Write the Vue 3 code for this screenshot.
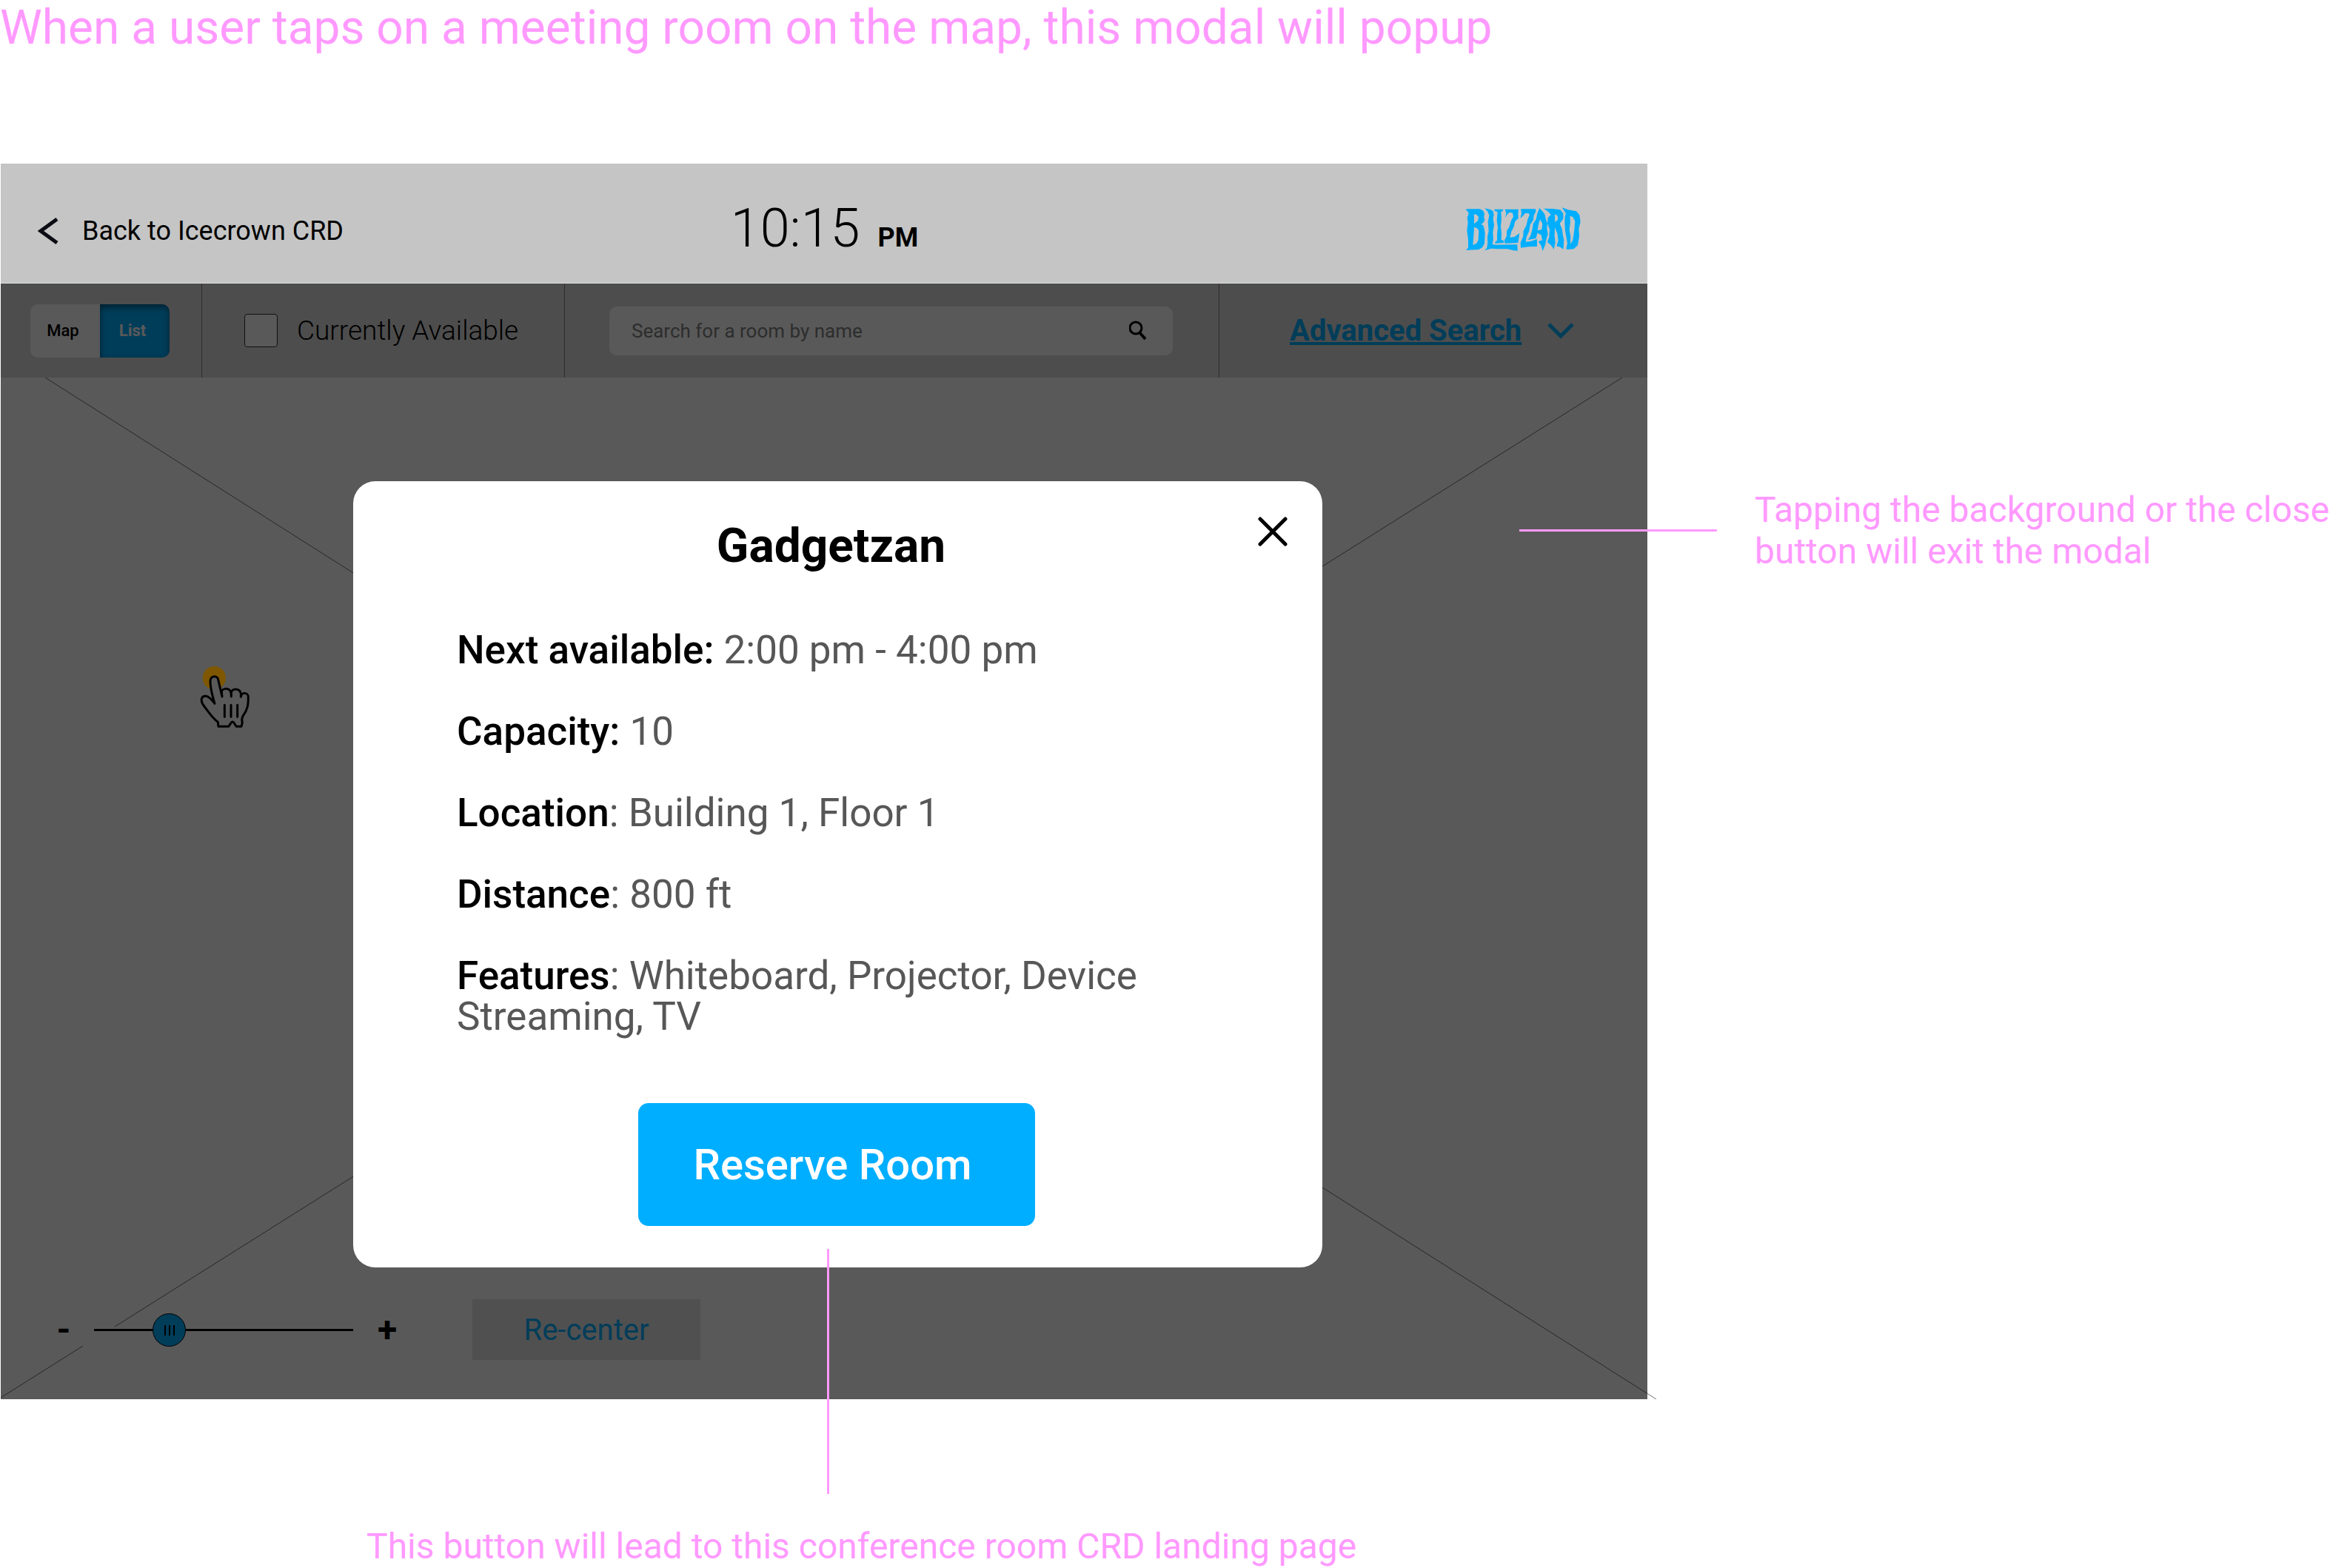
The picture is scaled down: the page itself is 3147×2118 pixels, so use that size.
<script setup>
import { ref } from 'vue'

const view = ref('list')
const available = ref(false)
const query = ref('')
const zoom = ref(26)

const details = [
  { label: 'Next available:', value: ' 2:00 pm - 4:00 pm' },
  { label: 'Capacity:', value: ' 10' },
  { label: 'Location', value: ': Building 1, Floor 1' },
  { label: 'Distance', value: ': 800 ft' },
  { label: 'Features', value: ': Whiteboard, Projector, Device Streaming, TV' },
]
</script>

<template>
  <main class="page">
    <h1 class="caption">When a user taps on a meeting room on the map, this modal will popup</h1>

    <div class="board">
      <section class="frame">
        <header class="header">
          <a class="back" href="#">
            <svg width="30" height="36" viewBox="0 0 30 36" aria-hidden="true">
              <path d="M26 2 L4 18 L26 34" fill="none" stroke="#0b0c14" stroke-width="5" />
            </svg>
            <span>Back to Icecrown CRD</span>
          </a>
          <p class="clock">10:15<span class="meridiem">PM</span></p>
          <svg class="logo" width="157" height="59" viewBox="90 59 471 177" role="img" aria-label="Blizzard">
            <g fill="#00aeff" fill-rule="evenodd">
              <path d="M91 67L104 66L150 66L163 73L168 86L166 100L169 112L162 123L154 128L163 132L167 145L170 165L168 205L160 221L145 230L93 233L102 223L102 190L97 152L101 122L98 100L104 86L101 77ZM126 87L135 88L144 97L141 114L126 126ZM126 139L137 143L145 153L143 192L136 205L121 212L124 175Z" />
              <path d="M169 63L192 68L203 74L206 90L203 105L207 132L202 160L204 188L200 209L215 211L301 210L302 235L285 234L262 228L225 228L195 226L168 234L178 223L181 202L180 178L185 155L182 118L187 92L181 76Z" />
              <path d="M208 67L243 67L243 74L235 77L237 105L234 135L237 165L236 190L246 195L246 203L212 205L211 199L219 194L219 170L222 140L218 112L221 78L210 74Z" />
              <path d="M251 67L306 67L304 84L305 104L292 116L287 138L277 158L271 181L289 179L301 171L310 163L304 203L251 205L248 195L258 175L258 156L269 137L275 115L285 97L282 82L270 79L260 88L252 102L256 82Z" />
              <path d="M315 66L375 66L376 76L368 92L366 110L353 130L349 155L338 180L335 199L355 197L381 188L381 218L345 219L315 223L314 202L325 177L326 154L338 132L343 108L351 89L347 84L333 83L323 95L314 103L318 82Z" />
              <path d="M391 62L401 73L412 86L416 105L423 125L421 145L425 168L418 190L415 208L404 236L397 213L386 198L402 192L398 171L382 163L377 185L344 191L354 176L362 147L365 126L377 108L382 84ZM393 108L403 126L400 149L383 153L387 128Z" />
              <path d="M408 64L444 65L475 69L487 84L487 106L473 125L482 146L486 174L490 190L488 229L475 220L460 216L467 194L463 164L453 141L452 176L455 202L449 229L439 214L423 200L430 180L432 148L423 125L425 102L437 88L424 75ZM453 86L464 94L466 108L454 120Z" />
              <path d="M482 60L507 69L540 75L553 90L557 119L550 145L552 175L546 213L530 228L500 230L500 222L504 206L500 182L495 155L493 122L494 96L498 84ZM514 94L526 98L535 116L532 150L526 192L516 208L517 178L512 150L516 120Z" />
            </g>
          </svg>
        </header>

        <div class="stage">
          <div class="app">
            <div class="toolbar">
              <div class="cell cell-view">
                <div class="toggle" role="group" aria-label="View">
                  <button type="button" class="toggle-item" :class="{ active: view === 'map' }" @click="view = 'map'">Map</button>
                  <button type="button" class="toggle-item" :class="{ active: view === 'list' }" @click="view = 'list'">List</button>
                </div>
              </div>
              <div class="cell cell-available">
                <input id="available" v-model="available" type="checkbox" class="check" />
                <label for="available">Currently Available</label>
              </div>
              <div class="cell cell-search">
                <div class="search">
                  <input v-model="query" type="text" class="search-input" placeholder="Search for a room by name" aria-label="Search for a room by name" />
                  <svg width="24" height="27" viewBox="0 0 24 27" aria-hidden="true">
                    <circle cx="9" cy="10" r="8" fill="none" stroke="#000" stroke-width="3" />
                    <path d="M14 16 L22 25" stroke="#000" stroke-width="4" />
                  </svg>
                </div>
              </div>
              <div class="cell cell-advanced">
                <a href="#" class="advanced">Advanced Search</a>
                <svg width="38" height="24" viewBox="0 0 38 24" aria-hidden="true">
                  <path d="M3 3 L19 19 L35 3" fill="none" stroke="#00aeff" stroke-width="5" />
                </svg>
              </div>
            </div>

            <div class="map">
              <svg class="map-lines" viewBox="0 0 2236 1380" preserveAspectRatio="none" aria-hidden="true">
                <path d="M60 0 L2236 1380 M2190 0 L154 1282 M111 1308 L0 1378" fill="none" stroke="#707070" stroke-width="1" />
              </svg>
              <div class="controls">
                <button type="button" class="step step-out" aria-label="Zoom out">-</button>
                <input v-model="zoom" type="range" min="0" max="100" class="slider" aria-label="Zoom level" />
                <button type="button" class="step step-in" aria-label="Zoom in">+</button>
                <button type="button" class="recenter">Re-center</button>
              </div>
            </div>
          </div>

          <div class="overlay">
            <svg class="tap" width="120" height="130" viewBox="0 0 360 390" aria-hidden="true">
              <circle cx="148" cy="137" r="47" fill="#7e5700" />
              <path
                d="M150 241C142 215 132 180 132 150C132 126 163 124 165 148L180 213L178 195C178 178 210 174 216 198L217 213V198C217 180 250 176 256 200V214C258 194 286 194 286 215C286 245 284 265 264 292C260 300 258 305 262 318L258 334H238L232 326Q222 304 212 326L206 334H165L163 316C140 300 125 275 103 246C90 225 98 208 115 211C130 214 140 228 150 241Z"
                fill="#595959" stroke="#000" stroke-width="9" stroke-linejoin="round"
              />
              <path d="M190 247V295M216 247V295M242 247V295" stroke="#000" stroke-width="9" stroke-linecap="round" />
            </svg>

            <div class="modal" role="dialog" aria-labelledby="room-name">
              <h2 id="room-name" class="room">Gadgetzan</h2>
              <button type="button" class="close" aria-label="Close">
                <svg width="40" height="40" viewBox="0 0 40 40" aria-hidden="true">
                  <path d="M3 3 L37 37 M37 3 L3 37" stroke="#000" stroke-width="5" stroke-linecap="round" />
                </svg>
              </button>
              <dl class="details">
                <div v-for="item in details" :key="item.label">
                  <dt>{{ item.label }}</dt>
                  <dd>{{ item.value }}</dd>
                </div>
              </dl>
              <button type="button" class="reserve">Reserve Room</button>
              <span class="pointer pointer-down"></span>
            </div>
          </div>
        </div>
      </section>

      <aside class="note">
        <span class="pointer pointer-left"></span>
        Tapping the background or the close button will exit the modal
      </aside>
    </div>

    <p class="footnote">This button will lead to this conference room CRD landing page</p>
  </main>
</template>

<style>
body {
  margin: 0;
  background: #fff;
}
</style>

<style scoped>
.page {
  font-family: Roboto, "Liberation Sans", sans-serif;
  color: #000;
}
h1, h2, p, dl, dd {
  margin: 0;
}
button, input {
  font-family: inherit;
  margin: 0;
  padding: 0;
  border: 0;
  box-sizing: border-box;
}
svg {
  display: block;
  flex: none;
}

/* annotations */
.caption, .note, .footnote {
  color: #ff99ff;
  font-weight: 400;
}
.caption {
  font-size: 64px;
  line-height: 76px;
  padding-bottom: 145px;
}
.note {
  position: relative;
  padding-top: 440px;
  font-size: 48px;
  line-height: 56px;
}
.footnote {
  padding: 171px 0 0 495px;
  font-size: 48px;
  line-height: 56px;
}
.pointer {
  position: absolute;
  background: #ff99ff;
}
.pointer-left {
  top: 494px;
  left: -318px;
  width: 267px;
  height: 3px;
}
.pointer-down {
  top: calc(100% - 25px);
  left: calc(50% - 15px);
  width: 3px;
  height: 331px;
}

.board {
  display: grid;
  grid-template-columns: minmax(0, 1fr) 777px;
  column-gap: 145px;
  padding-left: 1px;
}

/* header */
.header {
  display: grid;
  grid-template-columns: 1fr auto 1fr;
  align-items: center;
  padding: 46px 89px 31px 50px;
  background: #c5c5c5;
  border-bottom: 1px solid #dde3e0;
}
.back {
  display: flex;
  align-items: center;
  gap: 30px;
  padding-top: 6px;
  font-size: 36px;
  line-height: 42px;
  color: #000;
  text-decoration: none;
}
.clock {
  font-size: 72px;
  line-height: 84px;
  font-weight: 300;
  padding-left: 40px;
}
.meridiem {
  margin-left: 24px;
  font-size: 36px;
  line-height: 36px;
  font-weight: 700;
}
.logo {
  justify-self: end;
}

/* stage: the app with the dimmed layer over it */
.stage {
  display: grid;
}
.app, .overlay {
  grid-area: 1 / 1;
  min-width: 0;
}
.app {
  display: flex;
  flex-direction: column;
}
.overlay {
  position: relative;
  padding: 267px 439px 178px 476px;
  background: rgba(0, 0, 0, 0.65);
}

/* toolbar */
.toolbar {
  display: flex;
  height: 127px;
  background: #dcdcdc;
}
.cell {
  display: flex;
  align-items: center;
  box-sizing: border-box;
  border-right: 1px solid #808080;
}
.cell-view {
  width: 272px;
  padding-left: 40px;
}
.cell-available {
  width: 490px;
  padding-left: 57px;
  gap: 26px;
  font-size: 37px;
  line-height: 42px;
  font-weight: 300;
}
.cell-search {
  flex: 1;
  padding: 0 62px 0 60px;
}
.cell-advanced {
  width: 578px;
  padding-left: 95px;
  gap: 34px;
  border-right: 0;
}
.toggle {
  display: flex;
  width: 188px;
  height: 72px;
  border-radius: 10px;
  overflow: hidden;
}
.toggle-item {
  flex: 1;
  padding-right: 6px;
  background: #fff;
  color: #000;
  font-size: 22px;
  font-weight: 500;
}
.toggle-item.active {
  background: #00aeff;
  color: #fff;
  font-weight: 700;
  box-shadow: inset 0 4px 8px rgba(0, 0, 0, 0.5);
}
.check {
  appearance: none;
  width: 45px;
  height: 45px;
  background: #fff;
  border: 1px solid #333;
  border-radius: 4px;
}
.search {
  display: flex;
  align-items: center;
  width: 100%;
  height: 66px;
  padding: 0 35px 0 30px;
  box-sizing: border-box;
  background: #fff;
  border-radius: 10px;
}
.search-input {
  flex: 1;
  background: transparent;
  font-size: 26px;
}
.search-input::placeholder {
  color: #828282;
  opacity: 1;
}
.advanced {
  color: #00aeff;
  font-size: 40px;
  line-height: 46px;
  font-weight: 700;
  text-decoration: underline;
}

/* map */
.map {
  position: relative;
  flex: 1;
  display: flex;
  align-items: flex-end;
  background: #fff;
}
.map-lines {
  position: absolute;
  top: 0;
  left: 0;
  width: calc(100% + 12px);
  height: 100%;
}
.tap {
  position: absolute;
  top: 487px;
  left: 239px;
}
.controls {
  position: relative;
  display: flex;
  align-items: center;
  padding: 0 0 53px 64px;
}
.step {
  background: transparent;
  color: #000;
  font-size: 48px;
  line-height: 56px;
  font-weight: 700;
}
.step-out {
  width: 42px;
  margin-right: 20px;
}
.step-in {
  width: 52px;
  margin: 0 89px 0 20px;
}
.slider {
  appearance: none;
  width: 350px;
  height: 45px;
  background: linear-gradient(#000, #000) center / 100% 3px no-repeat;
}
.slider::-webkit-slider-thumb {
  appearance: none;
  width: 45px;
  height: 45px;
  box-sizing: border-box;
  border: 1px solid #000;
  border-radius: 50%;
  background:
    linear-gradient(#000, #000) 15px 15px / 2px 14px no-repeat,
    linear-gradient(#000, #000) 21px 15px / 2px 14px no-repeat,
    linear-gradient(#000, #000) 27px 15px / 2px 14px no-repeat,
    #00aeff;
}
.recenter {
  width: 308px;
  height: 82px;
  background: #e5e5e5;
  color: #00aeff;
  font-size: 40px;
}

/* modal */
.modal {
  position: relative;
  display: flex;
  flex-direction: column;
  padding: 50px 140px 56px;
  background: #fff;
  border-radius: 30px;
}
.room {
  padding-right: 18px;
  font-size: 64px;
  line-height: 76px;
  font-weight: 700;
  text-align: center;
}
.close {
  position: absolute;
  top: 48px;
  right: 47px;
  background: transparent;
}
.details {
  display: flex;
  flex-direction: column;
  gap: 55px;
  margin-top: 75px;
  font-size: 53px;
  line-height: 55px;
}
.details dt {
  display: inline;
  font-weight: 500;
}
.details dd {
  display: inline;
  color: #575757;
  white-space: pre-wrap;
}
.reserve {
  align-self: center;
  width: 536px;
  height: 166px;
  margin: 89px 4px 0 0;
  padding-right: 10px;
  background: #00aeff;
  border-radius: 14px;
  color: #fff;
  font-size: 58px;
  font-weight: 500;
}
</style>
